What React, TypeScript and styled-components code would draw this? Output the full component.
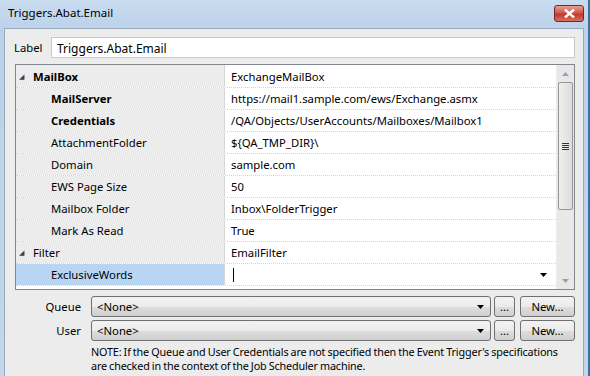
import styled, { createGlobalStyle } from 'styled-components';

const GlobalStyle = createGlobalStyle`
    body {
        margin: 0;
        font-family: 'Noto Sans', 'Open Sans', sans-serif;
        font-size: 11.3px;
        color: #000;
    }
`;

interface Property {
    name: string;
    value: string;
    level: 0 | 1;
    bold?: boolean;
    expandable?: boolean;
    selected?: boolean;
}

const properties: Property[] = [
    { name: 'MailBox', value: 'ExchangeMailBox', level: 0, bold: true, expandable: true },
    { name: 'MailServer', value: 'https://mail1.sample.com/ews/Exchange.asmx', level: 1, bold: true },
    { name: 'Credentials', value: '/QA/Objects/UserAccounts/Mailboxes/Mailbox1', level: 1, bold: true },
    { name: 'AttachmentFolder', value: '${QA_TMP_DIR}\\', level: 1 },
    { name: 'Domain', value: 'sample.com', level: 1 },
    { name: 'EWS Page Size', value: '50', level: 1 },
    { name: 'Mailbox Folder', value: 'Inbox\\FolderTrigger', level: 1 },
    { name: 'Mark As Read', value: 'True', level: 1 },
    { name: 'Filter', value: 'EmailFilter', level: 0, expandable: true },
    { name: 'ExclusiveWords', value: '', level: 1, selected: true },
];

const DownArrow = () => (
    <svg width="7" height="4" viewBox="0 0 7 4">
        <path d="M0 0 H7 L3.5 4 Z" fill="#000" />
    </svg>
);

const App = (): JSX.Element => {
    return (
        <>
            <GlobalStyle />
            <Window>
                <TitleBar>
                    <Title>Triggers.Abat.Email</Title>
                    <CloseButton>
                        <svg width="11" height="9" viewBox="0 0 11 9">
                            <path d="M1 0.5 L10 8.5 M10 0.5 L1 8.5" stroke="#fff" strokeWidth="2.4" />
                        </svg>
                    </CloseButton>
                </TitleBar>
                <Body>
                    <LabelRow>
                        <FieldLabel>Label</FieldLabel>
                        <TextInput>Triggers.Abat.Email</TextInput>
                    </LabelRow>

                    <Grid>
                        <Rows>
                            {properties.map((p) => (
                                <Row key={p.name}>
                                    <NameCell selected={p.selected}>
                                        <Expander>{p.expandable ? '◢' : ''}</Expander>
                                        <NameText level={p.level} bold={p.bold}>
                                            {p.name}
                                        </NameText>
                                    </NameCell>
                                    <ValueCell>
                                        {p.selected ? (
                                            <>
                                                <Caret />
                                                <ValueArrow>
                                                    <DownArrow />
                                                </ValueArrow>
                                            </>
                                        ) : (
                                            p.value
                                        )}
                                    </ValueCell>
                                </Row>
                            ))}
                        </Rows>
                        <ScrollBar>
                            <ScrollArrow>
                                <svg width="7" height="4" viewBox="0 0 7 4">
                                    <path d="M0 4 H7 L3.5 0 Z" fill="#a0a0a0" />
                                </svg>
                            </ScrollArrow>
                            <Track>
                                <Thumb>
                                    <Grip />
                                </Thumb>
                            </Track>
                            <ScrollArrow>
                                <svg width="7" height="4" viewBox="0 0 7 4">
                                    <path d="M0 0 H7 L3.5 4 Z" fill="#a0a0a0" />
                                </svg>
                            </ScrollArrow>
                        </ScrollBar>
                    </Grid>

                    <Form>
                        <FormLabel>Queue</FormLabel>
                        <Combo>
                            &lt;None&gt;
                            <DownArrow />
                        </Combo>
                        <SmallButton>...</SmallButton>
                        <NewButton>New...</NewButton>

                        <FormLabel>User</FormLabel>
                        <Combo>
                            &lt;None&gt;
                            <DownArrow />
                        </Combo>
                        <SmallButton>...</SmallButton>
                        <NewButton>New...</NewButton>

                        <Note>
                            NOTE: If the Queue and User Credentials are not specified then the Event Trigger's
                            specifications
                            <br />
                            are checked in the context of the Job Scheduler machine.
                        </Note>
                    </Form>
                </Body>
            </Window>
        </>
    );
};

export default App;

const Window = styled.div`
    width: 590px;
    height: 376px;
    box-sizing: border-box;
    display: flex;
    flex-direction: column;
    background: linear-gradient(180deg, #c9dbef 0%, #bcd2ea 30px, #c3d6ea 100%);
    border-right: 2px solid #3c6fa4;
    padding: 0 4px 0 4px;
`;

const TitleBar = styled.div`
    height: 28px;
    display: flex;
    align-items: flex-start;
    justify-content: space-between;
`;

const Title = styled.div`
    padding: 5px 0 0 4px;
    font-size: 11.5px;
    color: #000;
`;

const CloseButton = styled.div`
    margin-top: 5px;
    margin-right: 0;
    width: 30px;
    height: 17px;
    box-sizing: border-box;
    border: 1px solid #6b2b26;
    border-radius: 3px;
    background: linear-gradient(180deg, #e8a393 0%, #d2574a 45%, #c03a2c 55%, #d5715c 100%);
    display: flex;
    align-items: center;
    justify-content: center;
`;

const Body = styled.div`
    flex: 1;
    background: #ececec;
    border: 1px solid #98a9bd;
    border-bottom: none;
    padding: 7px 8px 0 9px;
    display: flex;
    flex-direction: column;
`;

const LabelRow = styled.div`
    display: flex;
    align-items: center;
    height: 22px;
`;

const FieldLabel = styled.div`
    width: 37px;
    padding-top: 1px;
`;

const TextInput = styled.div`
    flex: 1;
    height: 21px;
    box-sizing: border-box;
    background: #fff;
    border: 1px solid #c9c9c9;
    padding: 2px 0 0 5px;
    font-size: 12px;
`;

const Grid = styled.div`
    margin-top: 6px;
    margin-left: 1px;
    display: flex;
    border: 1px solid #828790;
    background: #fff;
    height: 226px;
    box-sizing: border-box;
    overflow: hidden;
`;

const Rows = styled.div`
    flex: 1;
    display: flex;
    flex-direction: column;
`;

const Row = styled.div`
    display: grid;
    grid-template-columns: 209px 1fr;
    height: 22px;
    border-bottom: 1px dotted #d4d4d4;
    box-sizing: border-box;
    &:first-child {
        height: 23px;
    }
`;

const NameCell = styled.div<{ selected?: boolean }>`
    display: flex;
    align-items: center;
    background: ${(p) => (p.selected ? '#b8d6f4' : '#ececec')};
    border-right: 1px solid #d6d6d6;
`;

const Expander = styled.span`
    width: 17px;
    padding-left: 3px;
    font-size: 7px;
    color: #404040;
    box-sizing: border-box;
`;

const NameText = styled.span<{ level: 0 | 1; bold?: boolean }>`
    padding-left: ${(p) => (p.level === 1 ? '18px' : '0')};
    font-weight: ${(p) => (p.bold ? 700 : 400)};
`;

const ValueCell = styled.div`
    display: flex;
    align-items: center;
    padding-left: 6px;
`;

const Caret = styled.span`
    width: 1px;
    height: 14px;
    background: #000;
    margin-left: 2px;
`;

const ValueArrow = styled.span`
    margin-left: auto;
    margin-right: 9px;
    display: flex;
`;

const ScrollBar = styled.div`
    width: 17px;
    display: flex;
    flex-direction: column;
    background: #e8e8e8;
    border-left: 1px solid #eeeeee;
`;

const ScrollArrow = styled.div`
    height: 17px;
    display: flex;
    align-items: center;
    justify-content: center;
`;

const Track = styled.div`
    flex: 1;
    padding: 0 1px;
`;

const Thumb = styled.div`
    height: 128px;
    box-sizing: border-box;
    border: 1px solid #979797;
    border-radius: 2px;
    background: linear-gradient(90deg, #f0f0f0, #dcdcdc);
    display: flex;
    align-items: center;
    justify-content: center;
`;

const Grip = styled.div`
    width: 7px;
    height: 7px;
    background: repeating-linear-gradient(180deg, #333 0 1px, transparent 1px 2px);
`;

const Form = styled.div`
    margin-top: 6px;
    display: grid;
    grid-template-columns: 72px 1fr 19px 55px;
    column-gap: 5px;
    row-gap: 3px;
    align-items: center;
`;

const FormLabel = styled.div`
    text-align: right;
    padding-right: 5px;
`;

const Combo = styled.div`
    height: 21px;
    box-sizing: border-box;
    border: 1px solid #707070;
    border-radius: 3px;
    background: linear-gradient(180deg, #f2f2f2 0%, #ebebeb 50%, #dddddd 51%, #cfcfcf 100%);
    display: flex;
    align-items: center;
    justify-content: space-between;
    padding: 0 6px 0 5px;
`;

const SmallButton = styled.div`
    height: 21px;
    box-sizing: border-box;
    border: 1px solid #707070;
    border-radius: 3px;
    background: linear-gradient(180deg, #f2f2f2 0%, #ebebeb 50%, #dddddd 51%, #cfcfcf 100%);
    display: flex;
    justify-content: center;
    align-items: center;
    margin-left: -2px;
`;

const NewButton = styled(SmallButton)`
    margin-left: 0;
`;

const Note = styled.div`
    grid-column: 2 / 5;
    margin-top: 1px;
    line-height: 14px;
    font-size: 10.8px;
    letter-spacing: -0.15px;
    word-spacing: -0.5px;
    white-space: nowrap;
`;
